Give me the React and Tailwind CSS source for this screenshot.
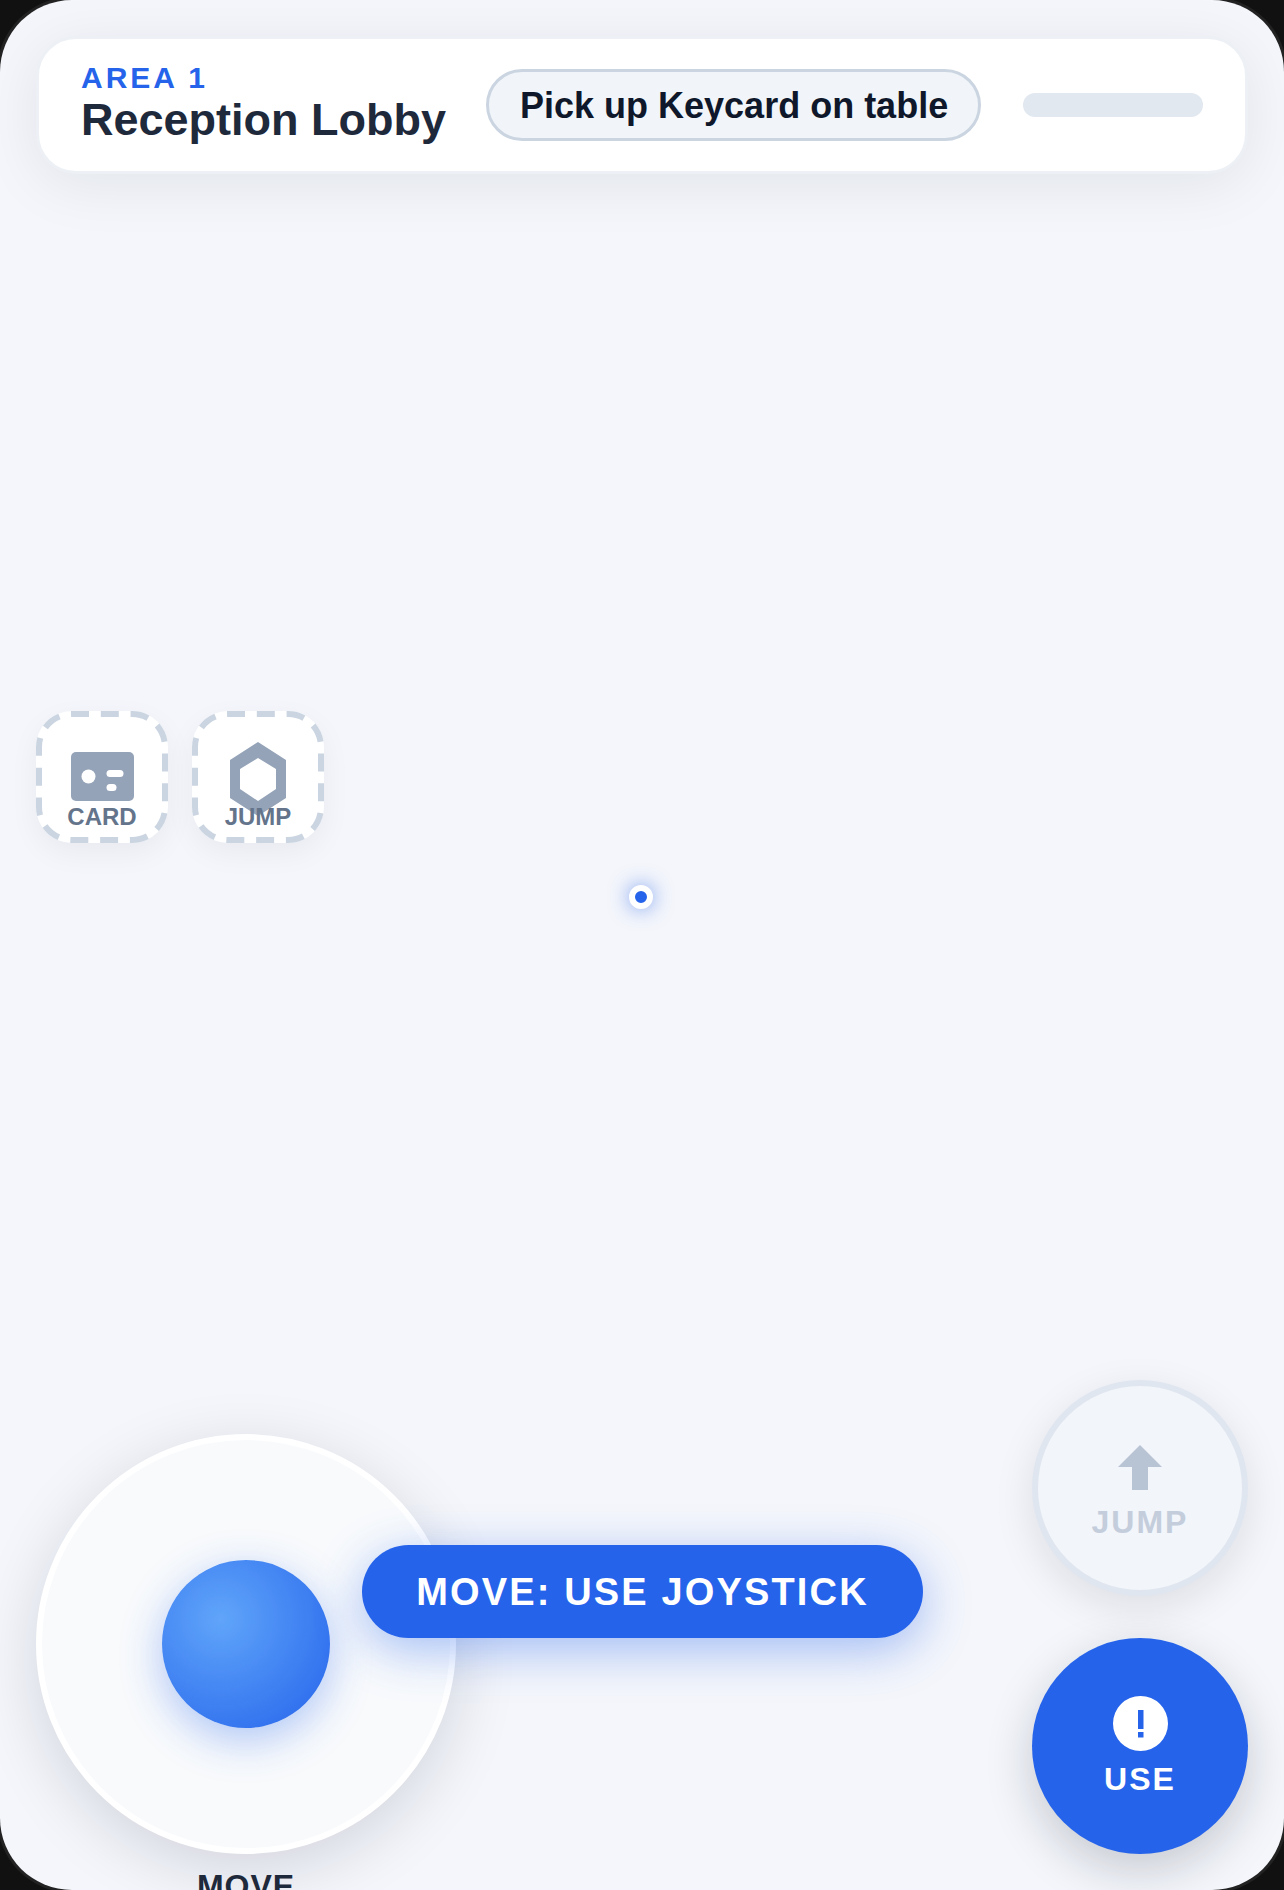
const sans = "font-['Liberation_Sans',Arial,sans-serif]";

function HudHeader() {
  return (
    <header className="flex h-[138px] items-center rounded-[40px] border-[3px] border-[#edf0f5] bg-white px-[42px] shadow-[0_10px_60px_rgba(15,23,42,0.08)]">
      <div className="flex flex-col">
        <span className="text-[30px] leading-[30px] font-bold tracking-[3px] text-[#2563eb]">AREA 1</span>
        <span className="text-[45px] leading-[54px] font-bold text-[#1e293b]">Reception Lobby</span>
      </div>
      <div className="ml-10 flex h-[72px] items-center rounded-full border-[3px] border-[#cbd5e1] bg-[#f1f5f9] pt-[2px] pr-[30px] pl-[31px] text-[36px] font-bold text-[#0f172a]">
        Pick up Keycard on table
      </div>
      <div className="ml-auto h-[24px] w-[180px] rounded-[12px] bg-[#e2e8f0]" />
    </header>
  );
}

function InventorySlot({ label, icon }) {
  return (
    <div className="relative flex h-[132px] w-[132px] flex-col items-center justify-end rounded-[36px] bg-white pb-[14px] shadow-[0_10px_30px_rgba(15,23,42,0.05)]">
      {/* dashed outline, drawn because the dash length differs from a css dashed border */}
      <svg width="132" height="132" className="absolute inset-0">
        <rect
          x="3"
          y="3"
          width="126"
          height="126"
          rx="33"
          fill="none"
          stroke="#cbd5e1"
          strokeWidth="6"
          strokeDasharray="18 11.8"
          strokeDashoffset="1"
        />
      </svg>
      {icon}
      <span className="relative text-[24px] leading-[24px] font-bold text-[#64748b]">{label}</span>
    </div>
  );
}

function CardIcon() {
  return (
    <svg width="63" height="49" viewBox="0 0 63 49" className="relative mb-1">
      <rect width="63" height="49" rx="5" fill="#94a3b8" />
      <circle cx="17.5" cy="24.5" r="7" fill="#fff" />
      <rect x="35.5" y="18" width="17" height="7" rx="3.5" fill="#fff" />
      <rect x="35.5" y="32" width="10" height="7" rx="3.5" fill="#fff" />
    </svg>
  );
}

function HexIcon() {
  return (
    <svg width="56" height="74" viewBox="0 0 56 74" className="relative mb-[-11px]">
      <path
        fillRule="evenodd"
        fill="#94a3b8"
        d="M28 0 56 18V56L28 74 0 56V18ZM28 16 10 27V47L28 59 46 47V27Z"
      />
    </svg>
  );
}

function Joystick() {
  return (
    <div className="mb-[-54px] flex flex-col items-center">
      <div className="flex h-[420px] w-[420px] items-center justify-center rounded-full border-[6px] border-white bg-[#f8fafc] shadow-[0_16px_64px_rgba(15,23,42,0.14)]">
        <div className="h-[168px] w-[168px] rounded-full bg-[radial-gradient(circle_at_35%_35%,#60a5fa,#2563eb)] shadow-[0_12px_40px_rgba(37,99,235,0.35)]" />
      </div>
      <span className="mt-[10px] text-[32px] leading-[44px] font-bold tracking-[1px] text-[#1e293b]">MOVE</span>
    </div>
  );
}

function ActionButtons() {
  return (
    <div className="flex flex-col gap-[42px]">
      <div className="flex h-[216px] w-[216px] flex-col items-center justify-center rounded-full border-[6px] border-[#e0e6ef] bg-[#f2f5fa] pt-[4px] shadow-[0_12px_40px_rgba(15,23,42,0.1)]">
        <svg width="44" height="45" viewBox="0 0 44 45" className="mt-1">
          <path d="M22 0 44 22H30V45H14V22H0Z" fill="#b8c4d4" />
        </svg>
        <span className="mt-[14px] text-[32px] leading-[36px] font-bold tracking-[2px] text-[#c4cddb]">JUMP</span>
      </div>
      <div className="flex h-[216px] w-[216px] flex-col items-center justify-center rounded-full bg-[#2563eb] pt-[1px] shadow-[0_16px_48px_rgba(15,23,42,0.2)]">
        <svg width="55" height="55" viewBox="0 0 55 55">
          <circle cx="27.5" cy="27.5" r="27.5" fill="#fff" />
          <rect x="25" y="14" width="5.5" height="19" fill="#2563eb" />
          <rect x="25" y="36" width="5.5" height="5.5" fill="#2563eb" />
        </svg>
        <span className="mt-[10px] text-[32px] leading-[36px] font-bold tracking-[2px] text-white">USE</span>
      </div>
    </div>
  );
}

export default function App() {
  return (
    <div className={`h-[1890px] w-[1284px] overflow-hidden bg-[#111111] ${sans}`}>
      <div className="relative flex h-full flex-col overflow-hidden rounded-[72px] bg-[#f4f6fb] p-9 shadow-[0_0_0_3px_#222222]">
        <HudHeader />

        <div className="mt-[537px] flex gap-6">
          <InventorySlot label="CARD" icon={<CardIcon />} />
          <InventorySlot label="JUMP" icon={<HexIcon />} />
        </div>

        <div className="mt-auto flex items-end justify-between">
          <Joystick />
          <ActionButtons />
        </div>

        {/* crosshair */}
        <div className="absolute top-[885px] left-[629px] h-6 w-6 rounded-full border-[6px] border-white bg-[#2563eb] shadow-[0_0_20px_rgba(37,99,235,0.6)]" />

        {/* tutorial prompt */}
        <div className="absolute top-[1545px] left-[362px] flex h-[93px] w-[561px] items-center justify-center rounded-full bg-[#2563eb] pt-[2px] text-[38px] font-bold tracking-[2.15px] text-white shadow-[0_12px_48px_rgba(37,99,235,0.4)]">
          MOVE: USE JOYSTICK
        </div>
      </div>
    </div>
  );
}
